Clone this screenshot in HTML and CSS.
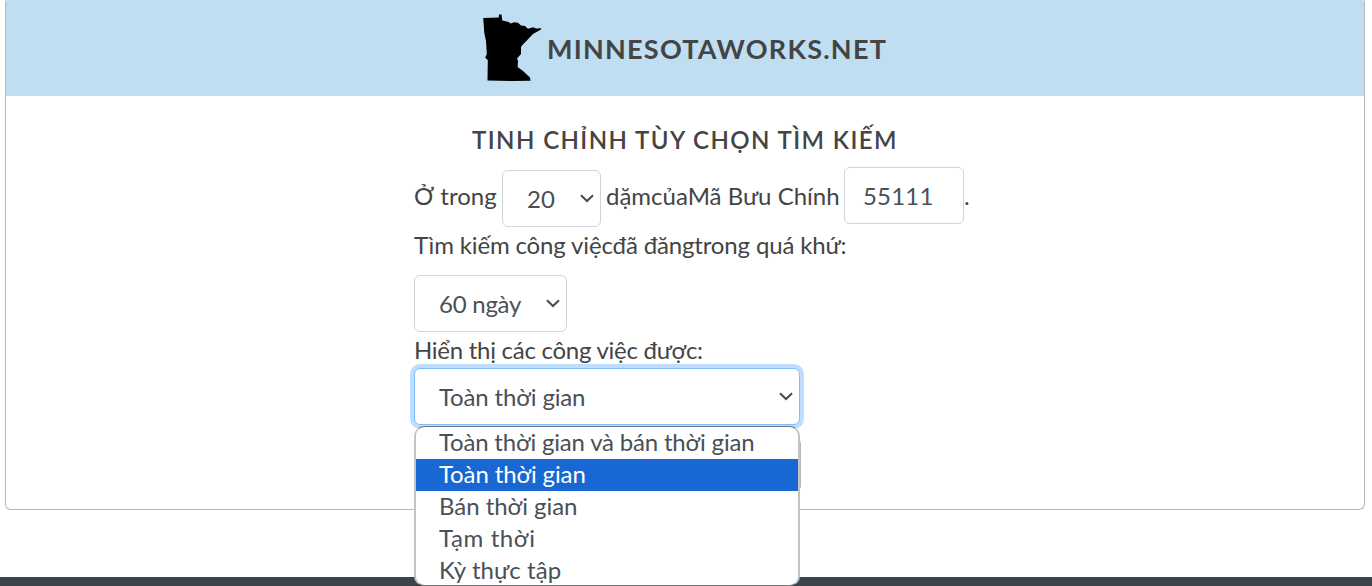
FILE: index.html
```html
<!DOCTYPE html>
<html lang="vi">
<head>
<meta charset="utf-8">
<title>MinnesotaWorks.net</title>
<link rel="stylesheet" href="styles.css">
</head>
<body>
<main class="card">
  <header class="brand">
    <svg class="state" width="60" height="70" viewBox="0 0 60 70"><path d="M.2 5L15.8 4.6L16 1.3L18.6 1.8L19.3 7.6L25 8.8L28 10.6L31 9.3L35 9.8L38 12.5L42 13L45 15.7L50 14.2L53 15.5L58.3 15.2L58 16.5L50 21L39 32.5L38 34V41L34 45.5L35 48L34.6 54L40 58L47 64.5L47.5 67.7L30 68L4.5 67.5L4.8 47L2.2 44.7L3.8 41L3 28L1.3 20Z"/></svg>
    <span class="brand-name">MINNESOTAWORKS.NET</span>
  </header>
  <section class="form">
    <h1 class="title">TINH CHỈNH TÙY CHỌN TÌM KIẾM</h1>
    <div class="row distance">
      <span class="text within">Ở trong</span>
      <div class="field miles"><span>20</span><svg class="chev" width="14" height="9" viewBox="0 0 14 9"><path d="M1 1.2L7 7L13 1.2"/></svg></div>
      <span class="text zip-label">dặmcủaMã Bưu Chính</span>
      <div class="field zip"><span>55111</span></div>
      <span class="text">.</span>
    </div>
    <div class="row posted"><span class="text">Tìm kiếm công việcđã đăngtrong quá khứ:</span></div>
    <div class="field days"><span>60 ngày</span><svg class="chev" width="14" height="9" viewBox="0 0 14 9"><path d="M1 1.2L7 7L13 1.2"/></svg></div>
    <div class="row show"><span class="text">Hiển thị các công việc được:</span></div>
    <div class="type">
      <div class="field focused"><span>Toàn thời gian</span><svg class="chev" width="14" height="9" viewBox="0 0 14 9"><path d="M1 1.2L7 7L13 1.2"/></svg></div>
      <div class="under"></div>
      <ul class="menu">
        <li>Toàn thời gian và bán thời gian</li>
        <li class="selected">Toàn thời gian</li>
        <li class="part-time">Bán thời gian</li>
        <li class="temporary">Tạm thời</li>
        <li class="intern">Kỳ thực tập</li>
      </ul>
    </div>
  </section>
</main>
<footer class="footer"></footer>
</body>
</html>
```
FILE: styles.css
```css
* { box-sizing: border-box; }
body { margin: 0; height: 586px; overflow: hidden; background: #fff; color: #444; font: 24px/32px Lato, sans-serif; display: flex; flex-direction: column; justify-content: space-between; }
.card { width: 1360px; height: 510px; margin-left: 5px; border: 1px solid #b7b7b7; border-top: 0; border-radius: 2px 2px 6px 6px; }
.brand { height: 96px; background: #bfdef2; display: flex; align-items: flex-start; padding: 13px 0 0 477px; }
.state { flex: none; }
.brand-name { margin: 20px 0 0 4px; font-size: 27px; font-weight: 700; letter-spacing: 1.24px; }
.form { width: 545px; margin-left: 408px; display: flex; flex-direction: column; align-items: flex-start; }
.title { margin: 28px 0 0 58px; height: 43px; font-size: 24px; font-weight: 600; line-height: 32px; letter-spacing: 1.42px; white-space: nowrap; }
.row { display: flex; align-items: flex-start; white-space: nowrap; }
.distance { height: 60px; }
.text { white-space: nowrap; }
.distance .text { margin-top: 13px; }
.within { width: 88px; }
.zip-label { width: 238px; margin-left: 5px; }
.field { height: 57px; flex: none; display: flex; align-items: center; justify-content: space-between; border: 1px solid #ced4da; border-radius: 6px; background: #fff; color: #495057; padding: 0 6px 0 24px; white-space: nowrap; }
.chev { fill: none; stroke: #444b52; stroke-width: 2; margin-top: -1px; }
.miles { width: 99px; margin-top: 3px; }
.zip { width: 120px; padding-left: 18px; letter-spacing: .2px; }
.posted { height: 48px; padding-top: 2px; letter-spacing: -.15px; }
.days { width: 153px; letter-spacing: -.25px; }
.show { height: 36px; padding-top: 2px; letter-spacing: -.27px; }
.type { position: relative; }
.focused { width: 386px; border-color: #80bdff; box-shadow: 0 0 0 4px #bfdeff; letter-spacing: -.15px; }
.under { position: absolute; left: 0; top: 70px; width: 387px; height: 54px; border: 1px solid #b7b7b7; border-radius: 6px; }
.menu { position: absolute; left: 0; top: 58px; width: 386px; height: 160px; margin: 0; padding: 0; list-style: none; border: 2px solid #c4c4c4; border-top: 1px solid #767676; border-bottom: 1px solid #777; border-radius: 10px; background: #fff; color: #495057; overflow: hidden; }
.menu li { height: 32px; padding-left: 23px; line-height: 30px; letter-spacing: -.19px; white-space: nowrap; }
.menu .selected { background: #1967d2; color: #fff; letter-spacing: -.13px; }
.menu .part-time { letter-spacing: -.04px; }
.menu .temporary { letter-spacing: .6px; }
.menu .intern { letter-spacing: .1px; }
.footer { height: 9px; background: #3c444c; flex: none; }
```
